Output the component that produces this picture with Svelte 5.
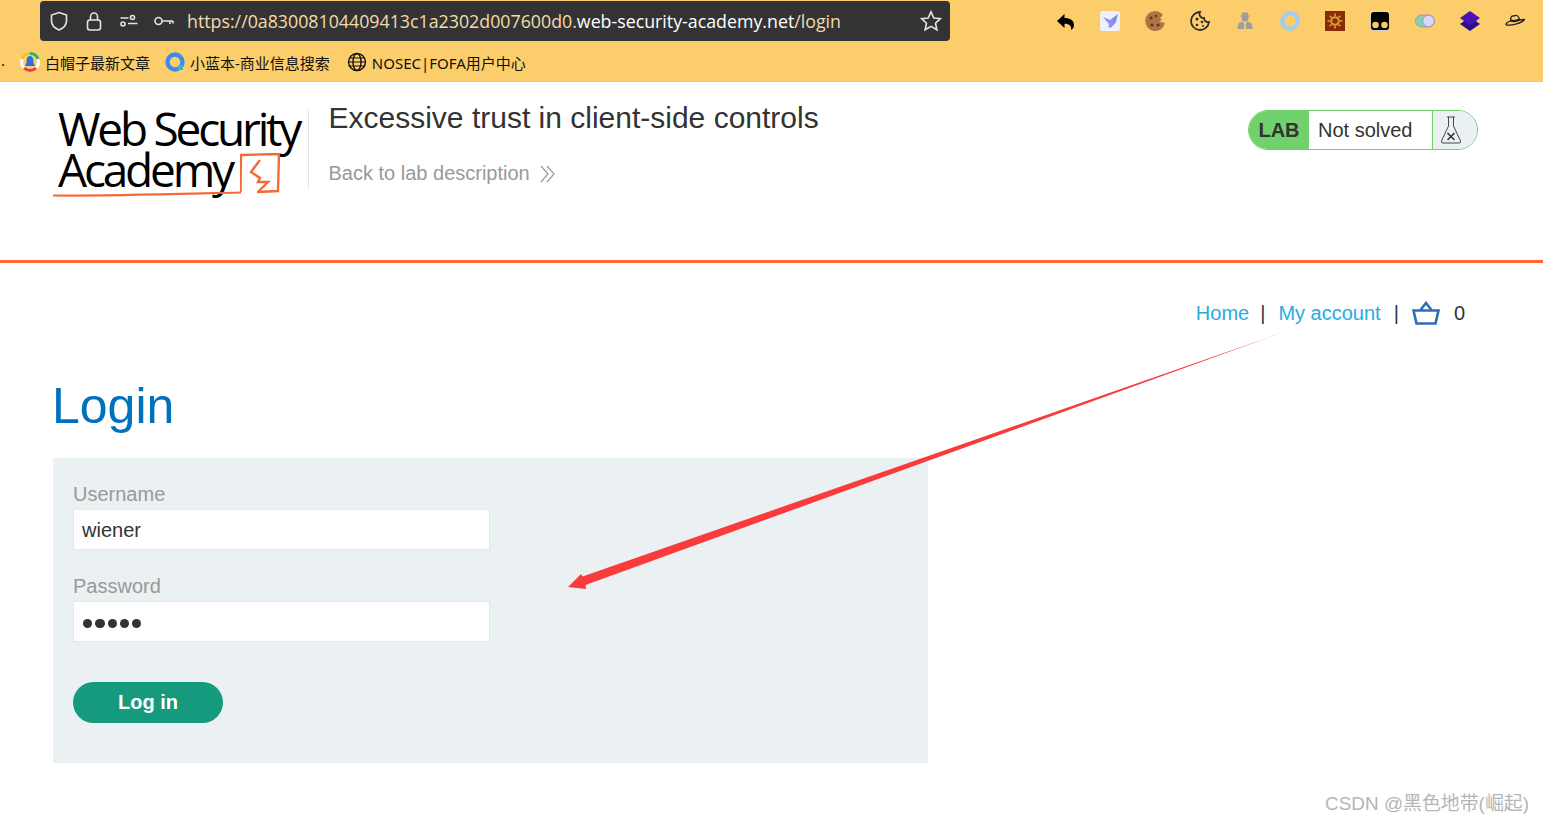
<script lang="ts">
  type Bookmark = { label: string; icon: string };

  const bookmarks: Bookmark[] = [
    { label: "白帽子最新文章", icon: "bell" },
    { label: "小蓝本-商业信息搜索", icon: "q" },
    { label: "NOSEC|FOFA用户中心", icon: "globe" },
  ];
</script>

<div class="page">
  <div class="chrome">
    <div class="toolbar">
      <div class="urlbar">
        <svg class="ico shield" viewBox="0 0 20 20" width="20" height="20"><path d="M10 1.5 L17.5 4 V10 C17.5 14.5 13.5 17.5 10 19 C6.5 17.5 2.5 14.5 2.5 10 V4 Z" /></svg>
        <svg class="ico lock" viewBox="0 0 20 20" width="20" height="20"><rect x="3.5" y="9" width="13" height="10" rx="2.5" /><path d="M6.5 9 V5.5 a3.5 3.5 0 0 1 7 0 V9" /></svg>
        <svg class="ico perm" viewBox="0 0 20 20" width="20" height="20"><circle cx="13.5" cy="6.5" r="2" /><path d="M1.5 7 H9.5 M18.500 12.500 H9" /><circle cx="4" cy="13" r="2" /></svg>
        <svg class="ico key" viewBox="0 0 22 20" width="22" height="20"><circle cx="5.500" cy="10" r="3.500" /><path d="M9 10 H20 M17 10 V13 M20 10 V12.500" /></svg>
        <div class="url">https://0a83008104409413c1a2302d007600d0.<span class="host">web-security-academy.net</span>/login</div>
        <svg class="ico star" viewBox="0 0 22 22" width="22" height="22"><path d="M11 1.800 L13.800 8 L20.400 8.700 L15.500 13.200 L16.900 19.800 L11 16.400 L5.100 19.800 L6.500 13.200 L1.600 8.700 L8.200 8 Z" /></svg>
      </div>
      <div class="extensions">
        <svg viewBox="0 0 20 20" width="20" height="20"><path d="M2 10 L9.500 3 V7 C15 7 19 9.500 19 14 C19 16 18 18 16 19 C17 15.500 14.500 12.800 9.500 12.800 V17 Z" fill="#000" /></svg>
        <svg viewBox="0 0 20 20" width="20" height="20">
          <defs><linearGradient id="bird" x1="0" y1="1" x2="1" y2="0"><stop offset="0" stop-color="#b58cf0" /><stop offset="1" stop-color="#5f8df5" /></linearGradient></defs>
          <rect width="20" height="20" rx="2.500" fill="#eef0fb" />
          <path d="M3 6 L10 9 L18 3 L15.500 12 L10.500 17 L8.500 16 L9 13 Z" fill="url(#bird)" />
        </svg>
        <svg viewBox="0 0 20 20" width="20" height="20"><path d="M10 0 C13 0 16 1.500 18 4 L15 7 L17 9 L14 10.500 L20 12 A10 10 0 1 1 10 0 Z" fill="#b07444" /><circle cx="6" cy="7" r="1.600" fill="#5d3a22" /><circle cx="11" cy="5" r="1.300" fill="#5d3a22" /><circle cx="7" cy="14" r="1.600" fill="#5d3a22" /><circle cx="13" cy="14" r="1.600" fill="#5d3a22" /></svg>
        <svg viewBox="0 0 20 20" width="20" height="20"><path d="M10 1 A9 9 0 1 0 19 11 A4 4 0 0 1 14 7 A4 4 0 0 1 10 1 Z" fill="none" stroke="#2b2b2b" stroke-width="1.800" /><circle cx="7" cy="8" r="1.500" fill="#2b2b2b" /><circle cx="12" cy="11" r="1.300" fill="#2b2b2b" /><circle cx="7" cy="14" r="1.300" fill="#2b2b2b" /><circle cx="13" cy="15" r="1" fill="#2b2b2b" /></svg>
        <svg viewBox="0 0 20 20" width="20" height="20" fill="#9e9e9e"><circle cx="10" cy="7" r="3.500" /><rect x="7" y="1.500" width="6" height="3.500" /><rect x="5" y="4.500" width="10" height="1" /><path d="M2 18 L3.500 12 L8 10.500 L9.200 13 V18 Z M18 18 L16.500 12 L12 10.500 L10.800 13 V18 Z" /></svg>
        <svg viewBox="0 0 20 20" width="20" height="20"><circle cx="10" cy="10" r="7.800" fill="none" stroke="#a3cdea" stroke-width="4.400" /></svg>
        <svg viewBox="0 0 20 20" width="20" height="20"><rect width="20" height="20" fill="#8b2a08" /><circle cx="10" cy="10" r="3.800" fill="none" stroke="#e0a030" stroke-width="2" /><path d="M10 2.500 V5 M10 15 V17.500 M2.500 10 H5 M15 10 H17.500 M4.700 4.700 L6.500 6.500 M13.500 13.500 L15.300 15.300 M15.300 4.700 L13.500 6.500 M6.500 13.500 L4.700 15.300" stroke="#e0a030" stroke-width="1.600" /></svg>
        <svg viewBox="0 0 20 20" width="20" height="20"><rect x="0.400" y="0.400" width="19.200" height="19.200" rx="3.500" fill="#000" stroke="#fff" stroke-width="0.800" /><circle cx="5.500" cy="14" r="3.300" fill="#f6c76c" /><circle cx="14.500" cy="14" r="3.300" fill="#f6c76c" /></svg>
        <svg viewBox="0 0 20 20" width="20" height="20"><rect x="0.500" y="4" width="19" height="12" rx="6" fill="#7fd3ae" stroke="#a596c4" /><circle cx="13.500" cy="10" r="5.800" fill="#d9d9f5" stroke="#a596c4" /></svg>
        <svg viewBox="0 0 20 20" width="20" height="20"><path d="M10 6 L20 13 L10 20 L0 13 Z" fill="#2c0f8a" /><path d="M10 0 L20 7 L10 14.500 L0 7 Z" fill="#4b12b5" /></svg>
        <svg viewBox="0 0 20 20" width="20" height="20" fill="none" stroke="#1e1e1e" stroke-width="1.300"><path d="M5.500 10 C5.500 6 6.500 4.500 9 5 C11 4 14 4 14.500 9 L19.500 8.500 C17 12 7 15 1.500 14 C0 13 2.500 11 5.500 10 Z" /><path d="M5.500 9.500 C9 10.500 12 10 14.500 8.500" stroke-width="2.200" /></svg>
      </div>
    </div>
    <div class="bookmarks">
      <span class="dot">.</span>
      {#each bookmarks as b}
        <div class="bookmark">
          {#if b.icon === "bell"}
            <svg viewBox="0 0 20 20" width="20" height="20"><circle cx="10" cy="10" r="8.500" fill="none" stroke="#fff" stroke-width="3" /><path d="M2 7 A8.500 8.500 0 0 1 10 1.500" fill="none" stroke="#f0c020" stroke-width="3" /><path d="M10 1.500 A8.500 8.500 0 0 1 18 7" fill="none" stroke="#30b060" stroke-width="3" /><path d="M4 16 A8.500 8.500 0 0 0 16 16" fill="none" stroke="#e84040" stroke-width="3" /><path d="M10 4 C6.500 4 6.500 8 6.500 11 L5 14 H15 L13.500 11 C13.500 8 13.500 4 10 4 Z" fill="#2a6fe0" /></svg>
          {:else if b.icon === "q"}
            <svg viewBox="0 0 20 20" width="20" height="20"><circle cx="10" cy="10" r="7.500" fill="none" stroke="#3d8bf2" stroke-width="4.400" /><rect x="13" y="13" width="5" height="5" fill="#2fb8d0" /></svg>
          {:else}
            <svg viewBox="0 0 20 20" width="20" height="20" fill="none" stroke="#111" stroke-width="1.400"><circle cx="10" cy="10" r="8.500" /><ellipse cx="10" cy="10" rx="4" ry="8.500" /><path d="M1.500 10 H18.500 M3 6 H17 M3 14 H17" stroke-width="1.100" /></svg>
          {/if}
          <span>{b.label}</span>
        </div>
      {/each}
    </div>
  </div>

  <header class="lab-header">
    <div class="logo">
      <div class="logo-line">Web Security</div>
      <div class="logo-line">Academy</div>
      <svg class="logo-mark" viewBox="0 0 40 42" width="40" height="42" fill="none" stroke="#f26a38" stroke-width="2.400"><path d="M0.500 39 L1 2 L39 1 L38 38 L17 39" /><path d="M20 7 L11 19 L20 25 L18 29 L28 29 L18 39" /></svg>
      <svg class="logo-swoosh" viewBox="0 0 190 6" width="190" height="6"><path d="M0 4.500 C50 5 120 3 188 1.500" stroke="#f26a38" stroke-width="2.200" fill="none" /></svg>
    </div>
    <div class="title-block">
      <h2>Excessive trust in client-side controls</h2>
      <a class="back">
        <span>Back to lab description</span>
        <svg viewBox="0 0 16 18" width="16" height="18" fill="none" stroke="#999" stroke-width="1.200"><path d="M1 1 L8 9 L1 17 M7 1 L14 9 L7 17" /></svg>
      </a>
    </div>
    <div class="status">
      <span class="status-lab">LAB</span>
      <span class="status-text">Not solved</span>
      <span class="status-icon">
        <svg viewBox="0 0 22 30" width="22" height="30" fill="none" stroke="#333" stroke-width="0.900"><path d="M7 2 H15 M8.500 2 V11 L1.500 26 Q1 28 3 28 H19 Q21 28 20.500 26 L13.500 11 V2" /><path d="M7.500 18 L14.500 25 M14.500 18 L7.500 25" stroke-width="1.600" /></svg>
      </span>
    </div>
  </header>

  <main>
    <nav class="top-links">
      <a class="home">Home</a>
      <span class="sep">|</span>
      <a>My account</a>
      <span class="sep">|</span>
      <svg viewBox="0 0 28 24" width="28" height="24" fill="none" stroke="#2c6fb5" stroke-width="2.600"><path d="M1.500 9.500 H26.500 L23.500 22.500 H4.500 Z" /><path d="M8.500 9 L14 2 L19.500 9" /></svg>
      <span class="count">0</span>
    </nav>

    <h1>Login</h1>

    <form class="login-form">
      <label for="u">Username</label>
      <div id="u" class="field">wiener</div>
      <label for="p">Password</label>
      <div id="p" class="field dots">
        {#each [0, 1, 2, 3, 4] as i (i)}<i></i>{/each}
      </div>
      <div class="button">Log in</div>
    </form>
  </main>

  <svg class="arrow" viewBox="0 0 1543 823" width="1543" height="823">
    <path d="M1281 333 L582.500 576.500 L581 574 L568 587 L586 589 L585.500 585 Z" fill="#f93b3b" />
  </svg>

  <div class="watermark">CSDN @黑色地带(崛起)</div>
</div>

<style>
  :global(body) {
    margin: 0;
    background: #fff;
  }

  .page {
    position: relative;
    width: 1543px;
    height: 823px;
    overflow: hidden;
    font-family: "Liberation Sans", Arial, sans-serif;
    color: #333;
  }

  .chrome {
    height: 81px;
    background: #fcce6b;
    border-bottom: 1px solid #f3c566;
    display: flex;
    flex-direction: column;
  }

  .toolbar {
    display: flex;
    padding: 1px 0 0 40px;
    height: 41px;
    box-sizing: border-box;
  }

  .urlbar {
    width: 910px;
    height: 40px;
    box-sizing: border-box;
    background: #333335;
    border-radius: 4px;
    display: flex;
    align-items: center;
    padding: 0 8px 0 9px;
  }

  .ico {
    fill: none;
    stroke: #e4e4e4;
    stroke-width: 1.600;
    flex: none;
  }

  .lock {
    margin-left: 15px;
  }

  .perm {
    margin-left: 15px;
  }

  .key {
    margin-left: 14px;
  }

  .url {
    flex: 1;
    margin-left: 12px;
    font-family: "Open Sans", "Noto Sans", sans-serif;
    font-size: 17.800px;
    color: #f3dcaa;
    white-space: nowrap;
  }

  .host {
    color: #fff;
  }

  .extensions {
    display: flex;
    gap: 25px;
    padding: 10px 0 0 105px;
  }

  .extensions svg {
    flex: none;
  }

  .bookmarks {
    display: flex;
    align-items: center;
    height: 40px;
    box-sizing: border-box;
    padding-top: 2px;
    font-family: "Noto Sans", "Noto Sans CJK SC", sans-serif;
    font-size: 15px;
    color: #111;
  }

  .dot {
    width: 20px;
    padding-left: 1px;
    box-sizing: border-box;
    margin-top: -4px;
  }

  .bookmark {
    display: flex;
    align-items: center;
    gap: 5px;
    margin-right: 15px;
    white-space: nowrap;
  }

  .bookmark:last-child {
    margin-left: 2px;
  }

  .lab-header {
    height: 181px;
    box-sizing: border-box;
    border-bottom: 3px solid #ff6633;
    display: flex;
    align-items: flex-start;
    padding: 28px 65px 0 53px;
  }

  .logo {
    width: 256px;
    height: 78px;
    position: relative;
    border-right: 1px solid #e4e4e4;
    flex: none;
    box-sizing: border-box;
    padding-left: 5px;
    font-family: "Open Sans", "Noto Sans", sans-serif;
    font-weight: 500;
    color: #000;
    font-size: 46px;
    line-height: 41px;
    letter-spacing: -3.200px;
    white-space: nowrap;
  }

  .logo-line {
    position: relative;
    top: -2px;
  }

  .logo-mark {
    position: absolute;
    left: 187px;
    top: 43px;
  }

  .logo-swoosh {
    position: absolute;
    left: 0;
    top: 81px;
  }

  .title-block {
    flex: 1;
    padding: 0 0 0 19.500px;
    margin-top: -10px;
  }

  h2 {
    margin: 0;
    font-size: 30px;
    font-weight: 400;
    line-height: 36px;
    color: #333;
  }

  .back {
    display: flex;
    align-items: center;
    gap: 10px;
    margin-top: 26px;
    font-size: 20px;
    color: #999;
  }

  .status {
    width: 230px;
    height: 40px;
    box-sizing: border-box;
    border: 1px solid #70d16d;
    border-radius: 20px;
    display: flex;
    overflow: hidden;
    flex: none;
  }

  .status-lab {
    width: 60px;
    background: #70d16d;
    font-weight: 700;
    font-size: 20px;
    line-height: 38px;
    text-align: center;
  }

  .status-text {
    width: 124px;
    box-sizing: border-box;
    border-right: 1px solid #70d16d;
    padding-left: 9px;
    font-size: 20px;
    line-height: 38px;
  }

  .status-icon {
    flex: 1;
    background: #ebf0f2;
    padding: 4px 0 0 7px;
  }

  main {
    padding: 0 53px;
  }

  .top-links {
    display: flex;
    justify-content: flex-end;
    align-items: center;
    gap: 13px;
    padding: 37px 25px 0 0;
    height: 26px;
    font-size: 20px;
  }

  .top-links a {
    color: #29abe2;
  }

  .top-links .home {
    margin-right: -2px;
  }

  .sep {
    color: #2b3a4a;
  }

  .count {
    margin-left: 1px;
  }

  h1 {
    margin: 49px 0 0 -1px;
    font-size: 50px;
    font-weight: 400;
    line-height: 62px;
    color: #0071bc;
  }

  .login-form {
    margin-top: 21px;
    width: 875px;
    height: 305px;
    box-sizing: border-box;
    background: #ebf0f2;
    padding: 24px 20px 0;
  }

  label {
    display: block;
    font-size: 20px;
    line-height: 24px;
    color: #999;
    margin-bottom: 3px;
  }

  .field {
    width: 417px;
    height: 41px;
    box-sizing: border-box;
    background: #fff;
    border: 1px solid #e6e6e6;
    padding-left: 8px;
    font-size: 20px;
    line-height: 41px;
    margin-bottom: 24px;
  }

  .dots {
    display: flex;
    align-items: center;
    gap: 3px;
    padding: 4px 0 0 9px;
    margin-bottom: 40px;
  }

  .dots i {
    width: 9.300px;
    height: 9.300px;
    border-radius: 50%;
    background: #333;
  }

  .button {
    width: 150px;
    height: 41px;
    background: #159a7e;
    border-radius: 21px;
    color: #fff;
    font-weight: 700;
    font-size: 20px;
    line-height: 41px;
    text-align: center;
  }

  .arrow {
    position: absolute;
    left: 0;
    top: 0;
    pointer-events: none;
  }

  .watermark {
    position: absolute;
    right: 14px;
    top: 788px;
    font-family: "Liberation Sans", "Noto Sans CJK SC", sans-serif;
    font-size: 18.900px;
    color: #b5b5b5;
    white-space: nowrap;
  }
</style>
